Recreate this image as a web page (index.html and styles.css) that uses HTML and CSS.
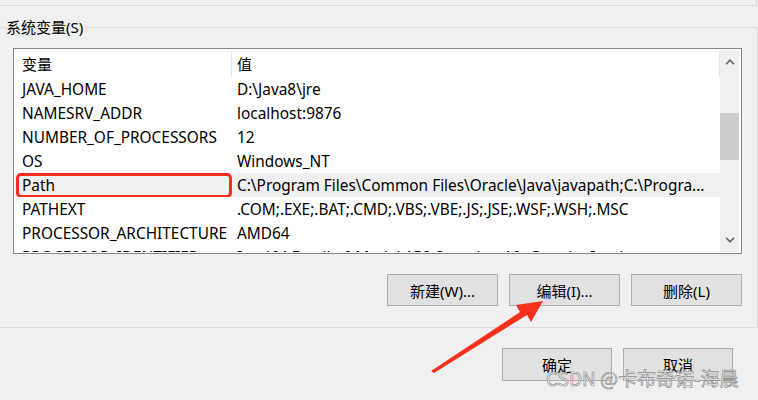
FILE: index.html
```html
<!DOCTYPE html>
<html lang="zh-CN">
<head>
<meta charset="utf-8">
<title>系统变量</title>
<link rel="stylesheet" href="styles.css">
</head>
<body>
<div class="page">
  <div class="prev-group"></div>
  <fieldset class="group">
    <legend>系统变量(S)</legend>
    <div class="listbox">
      <div class="table">
        <div class="row head"><div class="c name">变量</div><div class="c val">值</div></div>
        <div class="row"><div class="c name">JAVA_HOME</div><div class="c val">D:\Java8\jre</div></div>
        <div class="row"><div class="c name">NAMESRV_ADDR</div><div class="c val">localhost:9876</div></div>
        <div class="row"><div class="c name">NUMBER_OF_PROCESSORS</div><div class="c val">12</div></div>
        <div class="row"><div class="c name">OS</div><div class="c val">Windows_NT</div></div>
        <div class="row selected"><div class="c name">Path<span class="mark"></span></div><div class="c val">C:\Program Files\Common Files\Oracle\Java\javapath;C:\Progra...</div></div>
        <div class="row"><div class="c name">PATHEXT</div><div class="c val">.COM;.EXE;.BAT;.CMD;.VBS;.VBE;.JS;.JSE;.WSF;.WSH;.MSC</div></div>
        <div class="row"><div class="c name">PROCESSOR_ARCHITECTURE</div><div class="c val">AMD64</div></div>
        <div class="row"><div class="c name">PROCESSOR_IDENTIFIER</div><div class="c val">Intel64 Family 6 Model 158 Stepping 10, GenuineIntel</div></div>
      </div>
      <div class="scrollbar">
        <div class="sb-btn"><svg width="10" height="6" viewBox="0 0 10 6"><path d="M1 5.2 L5 1.2 L9 5.2" fill="none" stroke="#606060" stroke-width="1.6"/></svg></div>
        <div class="track"><div class="thumb"></div></div>
        <div class="sb-btn"><svg width="10" height="6" viewBox="0 0 10 6"><path d="M1 0.8 L5 4.8 L9 0.8" fill="none" stroke="#606060" stroke-width="1.6"/></svg></div>
      </div>
    </div>
    <div class="actions">
      <button class="btn">新建(W)...</button>
      <button class="btn">编辑(I)...</button>
      <button class="btn">删除(L)</button>
    </div>
  </fieldset>
  <div class="footer">
    <button class="btn btn-lg">确定</button>
    <button class="btn btn-lg">取消</button>
  </div>
  <svg class="arrow" width="758" height="400" viewBox="0 0 758 400">
    <polygon points="431,371 520,312 516,305 543,301 531,322 527,315 434,373" fill="#f8311f"/>
  </svg>
  <div class="watermark">CSDN @卡布奇诺-海晨</div>
</div>
</body>
</html>
```
FILE: styles.css
```css
* { box-sizing: border-box; }
html, body { margin: 0; padding: 0; }
body {
  background: #f0f0f0;
  font-family: "Noto Sans", "Noto Sans CJK SC", sans-serif;
  font-size: 15.4px;
  color: #000;
  width: 758px;
  height: 400px;
  overflow: hidden;
}
.page { position: relative; width: 758px; height: 400px; }
.prev-group {
  width: 757px;
  height: 6px;
  border-bottom: 1px solid #dcdcdc;
  border-right: 1px solid #dcdcdc;
}
.group {
  margin: 12px 0 0 0;
  width: 758px;
  border: 1px solid #dcdcdc;
  border-left: none;
  padding: 12px 15px 21px 13px;
}
.group legend {
  margin-left: -7px;
  padding: 0 2px 0 0;
  line-height: 18px;
  font-family: "Noto Sans", "Noto Sans CJK SC", sans-serif;
  font-size: 15px;
}
.listbox {
  width: 729px;
  height: 206px;
  border: 1px solid #828790;
  background: #fff;
  padding: 1px 2px 1px 0;
  display: grid;
  grid-template-columns: 1fr 19px;
  overflow: hidden;
}
.table { overflow: hidden; }
.row {
  display: grid;
  grid-template-columns: 218px 1fr;
  height: 24px;
  align-items: center;
  white-space: nowrap;
}
.row.head { height: 27px; }
.row.head .name, .row.head .val {
  border-right: 1px solid #e5e5e5;
  height: 25px;
  display: flex;
  align-items: center;
  font-family: "Noto Sans CJK SC", sans-serif;
  font-size: 15px;
}
.c { overflow: hidden; }
.c.name { padding-left: 8px; position: relative; height: 100%; display: flex; align-items: center; }
.c.val { padding-left: 5px; }
.row.selected { background: #f0f0f0; }
.mark {
  position: absolute;
  left: 2px;
  right: 0;
  top: 0;
  bottom: -1px;
  border: 3px solid #f62c1c;
  border-radius: 5px;
}
.scrollbar {
  background: #f0f0f0;
  display: flex;
  flex-direction: column;
}
.sb-btn {
  height: 24px;
  display: flex;
  align-items: center;
  justify-content: center;
  flex: none;
}
.track { flex: 1; padding-top: 39px; }
.thumb { height: 47px; background: #cdcdcd; }
.actions {
  margin-top: 20px;
  display: flex;
  justify-content: flex-end;
  gap: 11px;
  width: 729px;
}
.btn {
  width: 111px;
  height: 32px;
  background: #e1e1e1;
  border: 1px solid #adadad;
  border-radius: 0;
  font-family: "Noto Sans", "Noto Sans CJK SC", sans-serif;
  font-size: 15px;
  color: #000;
  padding: 0;
}
.footer {
  padding: 20px 25px 0 0;
  display: flex;
  justify-content: flex-end;
  gap: 11px;
}
.btn-lg { width: 110px; height: 33px; }
.arrow { position: absolute; left: 0; top: 0; pointer-events: none; }
.watermark {
  position: absolute;
  left: 546px;
  top: 366px;
  font-family: "Noto Sans CJK SC", sans-serif;
  font-size: 19px;
  line-height: 24px;
  color: rgba(250,250,250,0.95);
  -webkit-text-stroke: 0.7px #8c8c8c;
  white-space: nowrap;
}
```
